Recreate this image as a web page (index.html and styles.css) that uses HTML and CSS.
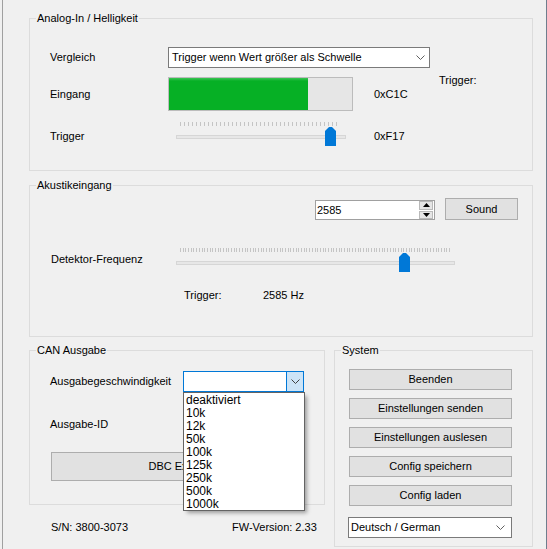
FILE: index.html
```html
<!DOCTYPE html>
<html>
<head>
<meta charset="utf-8">
<link rel="stylesheet" href="styles.css">
</head>
<body>
<div class="window">
  <section class="group g-analog">
    <span class="gtitle">Analog-In / Helligkeit</span>
    <div class="analog-grid">
      <span class="lbl">Vergleich</span>
      <div class="combo combo-cmp">
        <span class="combo-text">Trigger wenn Wert größer als Schwelle</span>
        <svg class="chev" width="9" height="6" viewBox="0 0 9 6"><path d="M0.5 0.5 L4.5 4.5 L8.5 0.5" fill="none" stroke="#606060" stroke-width="1"/></svg>
      </div>
      <span class="lbl">Eingang</span>
      <div class="progress"><div class="fill" style="width:75.7%"></div></div>
      <span class="val">0xC1C</span>
      <span class="trig">Trigger:</span>
      <span class="lbl low">Trigger</span>
      <div class="slider s1">
        <div class="ticks t1"></div>
        <div class="track"></div>
        <svg class="thumb" style="left:149px" width="11" height="19" viewBox="0 0 11 19"><polygon points="0,4 4,0 7,0 11,4 11,19 0,19" fill="#0078d7"/></svg>
      </div>
      <span class="val low">0xF17</span>
    </div>
  </section>

  <section class="group g-acoustic">
    <span class="gtitle">Akustikeingang</span>
    <div class="row-spin">
      <div class="spin">
        <span class="spin-text">2585</span>
        <div class="spin-btns">
          <div class="spin-btn"><svg width="7" height="4" viewBox="0 0 7 4"><polygon points="3.5,0 7,4 0,4" fill="#000"/></svg></div>
          <div class="spin-btn"><svg width="7" height="4" viewBox="0 0 7 4"><polygon points="0,0 7,0 3.5,4" fill="#000"/></svg></div>
        </div>
      </div>
      <div class="btn btn-sound">Sound</div>
    </div>
    <div class="row-freq">
      <span class="lbl freq-lbl">Detektor-Frequenz</span>
      <div class="slider s2">
        <div class="ticks t2"></div>
        <div class="track"></div>
        <svg class="thumb" style="left:223px" width="11" height="19" viewBox="0 0 11 19"><polygon points="0,4 4,0 7,0 11,4 11,19 0,19" fill="#0078d7"/></svg>
      </div>
    </div>
    <div class="row-trig">
      <span class="trig-lbl">Trigger:</span>
      <span>2585 Hz</span>
    </div>
  </section>

  <div class="bottom">
    <div class="left-col">
      <section class="group g-can">
        <span class="gtitle">CAN Ausgabe</span>
        <div class="can-row">
          <span class="lbl can-lbl">Ausgabegeschwindigkeit</span>
          <div class="combo combo-open">
            <div class="combo-btn">
              <svg width="9" height="6" viewBox="0 0 9 6"><path d="M0.5 0.5 L4.5 4.5 L8.5 0.5" fill="none" stroke="#404040" stroke-width="1"/></svg>
            </div>
            <ul class="droplist">
              <li>deaktiviert</li>
              <li>10k</li>
              <li>12k</li>
              <li>50k</li>
              <li>100k</li>
              <li>125k</li>
              <li>250k</li>
              <li>500k</li>
              <li>1000k</li>
            </ul>
          </div>
        </div>
        <div class="can-id">Ausgabe-ID</div>
        <div class="btn btn-dbc">DBC Export</div>
      </section>
      <div class="status">
        <span class="sn">S/N: 3800-3073</span>
        <span>FW-Version: 2.33</span>
      </div>
    </div>

    <section class="group g-system">
      <span class="gtitle">System</span>
      <div class="sys-col">
        <div class="btn sys-btn">Beenden</div>
        <div class="btn sys-btn">Einstellungen senden</div>
        <div class="btn sys-btn">Einstellungen auslesen</div>
        <div class="btn sys-btn">Config speichern</div>
        <div class="btn sys-btn">Config laden</div>
        <div class="combo combo-lang">
          <span class="combo-text">Deutsch / German</span>
          <svg class="chev" width="9" height="6" viewBox="0 0 9 6"><path d="M0.5 0.5 L4.5 4.5 L8.5 0.5" fill="none" stroke="#606060" stroke-width="1"/></svg>
        </div>
      </div>
    </section>
  </div>
</div>
</body>
</html>
```

FILE: styles.css
```css
* { box-sizing: border-box; }
html, body { margin: 0; padding: 0; }
body {
  background: #f0f0f0;
  font-family: "Liberation Sans", Arial, sans-serif;
  font-size: 11px;
  line-height: 13px;
  color: #000;
  overflow: hidden;
  width: 547px;
  height: 549px;
}
.window {
  margin-left: 2px;
  width: 545px;
  height: 549px;
  border-left: 1px solid #a0a0a0;
  border-right: 1px solid #6f7e8e;
  padding: 18px 0 0 26px;
  display: flex;
  flex-direction: column;
}
.group {
  position: relative;
  border: 1px solid #dcdcdc;
}
.gtitle {
  position: absolute;
  top: -7px;
  left: 6px;
  padding: 0 1px;
  background: #f0f0f0;
  white-space: nowrap;
}
.lbl { white-space: nowrap; }

/* Analog group */
.g-analog { width: 504px; height: 153px; }
.analog-grid {
  display: grid;
  grid-template-columns: 118px 206px 65px 1fr;
  grid-template-rows: 21px 34px 26px;
  row-gap: 9px;
  padding: 28px 0 0 20px;
  align-items: center;
}
.analog-grid > .lbl { grid-column: 1; }
.combo {
  position: relative;
  background: #fff;
  border: 1px solid #7a7a7a;
  height: 21px;
  display: flex;
  align-items: center;
}
.combo-text { padding-left: 3px; flex: 1; white-space: nowrap; }
.chev { margin-right: 4px; }
.combo-cmp { grid-column: 2 / 4; width: 262px; }
.progress {
  width: 185px;
  height: 34px;
  border: 1px solid #bcbcbc;
  background: #e6e6e6;
}
.fill {
  height: 100%;
  background: linear-gradient(to bottom, #3cc556 0, #06b025 3px, #06b025 100%);
}
.val { grid-column: 3; }
.trig { grid-column: 4; align-self: start; margin-top: -3px; }
.low { align-self: start; padding-top: 10px; }

.slider { position: relative; height: 26px; }
.s1 { margin-left: 8px; width: 170px; }
.s2 { width: 279px; }
.ticks {
  height: 4px;
  margin: 2px 6px 0 4px;
}
.t1 { background: repeating-linear-gradient(to right, #c4c4c4 0, #c4c4c4 1px, transparent 1px, transparent 4px); }
.t2 { margin-right: 5px; background: repeating-linear-gradient(to right, #c4c4c4 0, #c4c4c4 1px, transparent 1px, transparent 2.69px); }
.track {
  margin-top: 9px;
  height: 4px;
  border: 1px solid #d6d6d6;
  background: #e7e7e7;
}
.thumb { position: absolute; top: 7px; }

/* Acoustic group */
.g-acoustic { width: 504px; height: 152px; margin-top: 14px; padding-top: 12px; }
.row-spin {
  display: flex;
  align-items: flex-end;
  gap: 10px;
  margin-left: 285px;
}
.spin {
  width: 120px;
  height: 20px;
  border: 1px solid #a0a0a0;
  background: #fff;
  display: flex;
  align-items: center;
}
.spin-text { flex: 1; padding-left: 1px; }
.spin-btns {
  width: 14px;
  height: 18px;
  margin-right: 1px;
  display: flex;
  flex-direction: column;
  gap: 1px;
  padding: 0;
}
.spin-btn {
  flex: 1;
  background: #e5e5e5;
  border: 1px solid #b9b9b9;
  display: flex;
  align-items: center;
  justify-content: center;
}
.spin-btn svg { display: block; }
.btn {
  background: #e1e1e1;
  border: 1px solid #adadad;
  display: flex;
  align-items: center;
  justify-content: center;
  white-space: nowrap;
}
.btn-sound { width: 73px; height: 22px; }
.row-freq {
  display: flex;
  align-items: flex-start;
  margin-top: 26px;
}
.freq-lbl { width: 146px; padding: 7px 0 0 21px; }
.row-trig { display: flex; margin-top: 17px; padding-left: 154px; }
.trig-lbl { width: 79px; }

/* Bottom */
.bottom { display: flex; gap: 9px; margin-top: 13px; align-items: flex-start; }
.left-col { display: flex; flex-direction: column; }
.g-can { width: 296px; height: 155px; padding: 20px 0 0 20px; z-index: 2; }
.can-row { display: flex; align-items: center; }
.can-lbl { width: 133px; }
.combo-open {
  width: 121px;
  border-color: #0078d7;
  justify-content: flex-end;
}
.combo-btn {
  width: 17px;
  height: 19px;
  background: #cce4f7;
  border-left: 1px solid #0078d7;
  display: flex;
  align-items: center;
  justify-content: center;
}
.droplist {
  position: absolute;
  top: 20px;
  left: -1px;
  width: 122px;
  margin: 0;
  padding: 1px 0 0 2px;
  list-style: none;
  background: #fff;
  border: 1px solid #646464;
  height: 119px;
  box-shadow: 3px 3px 4px -1px rgba(0,0,0,0.35);
  z-index: 5;
}
.droplist li { height: 13px; line-height: 13px; font-size: 12px; }
.can-id { margin-top: 26px; }
.btn-dbc { margin: 21px 0 0 1px; width: 253px; height: 29px; }
.status { display: flex; margin-top: 16px; padding-left: 22px; }
.sn { width: 181px; }

.g-system { width: 199px; height: 197px; padding: 18px 0 0 14px; }
.sys-col { display: flex; flex-direction: column; gap: 8px; }
.sys-btn { width: 163px; height: 21px; }
.combo-lang { width: 164px; margin: 3px 0 0 -1px; border-color: #7a7a7a; }
.combo-lang .combo-text { padding-left: 2px; }
.combo-lang .chev { margin-right: 6px; }
```
